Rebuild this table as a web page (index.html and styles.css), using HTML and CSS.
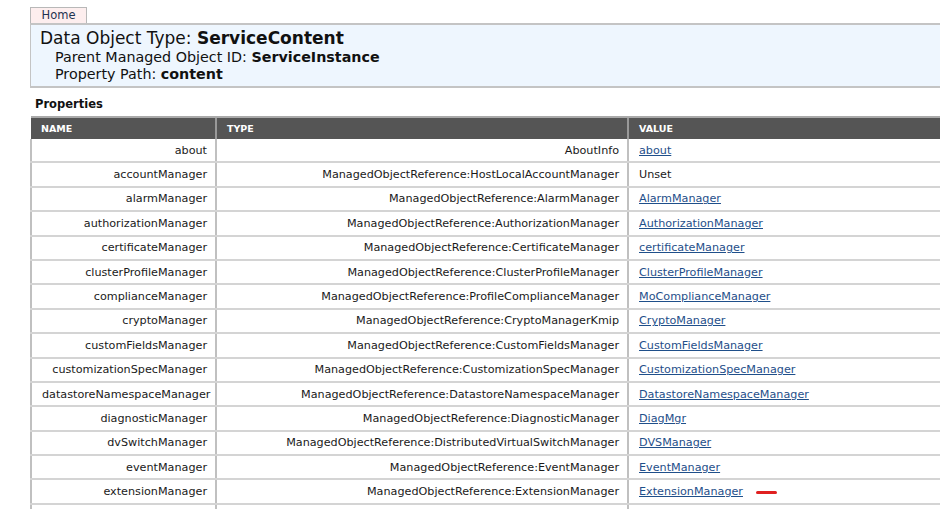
FILE: index.html
```html
<!DOCTYPE html>
<html>
<head>
<meta charset="utf-8">
<link rel="stylesheet" href="styles.css">
</head>
<body>
<div class="page">
  <div class="tabs"><a class="tab" href="#">Home</a></div>
  <div class="header">
    <div class="title">Data Object Type: <b>ServiceContent</b></div>
    <div class="sub">Parent Managed Object ID: <b>ServiceInstance</b></div>
    <div class="sub">Property Path: <b>content</b></div>
  </div>
  <div class="section">Properties</div>
  <table class="props">
    <thead>
      <tr><th class="c-name">NAME</th><th class="c-type">TYPE</th><th class="c-val">VALUE</th></tr>
    </thead>
    <tbody>
      <tr><td class="name">about</td><td class="type">AboutInfo</td><td class="val"><a href="#">about</a></td></tr>
      <tr><td class="name">accountManager</td><td class="type">ManagedObjectReference:HostLocalAccountManager</td><td class="val">Unset</td></tr>
      <tr><td class="name">alarmManager</td><td class="type">ManagedObjectReference:AlarmManager</td><td class="val"><a href="#">AlarmManager</a></td></tr>
      <tr><td class="name">authorizationManager</td><td class="type">ManagedObjectReference:AuthorizationManager</td><td class="val"><a href="#">AuthorizationManager</a></td></tr>
      <tr><td class="name">certificateManager</td><td class="type">ManagedObjectReference:CertificateManager</td><td class="val"><a href="#">certificateManager</a></td></tr>
      <tr><td class="name">clusterProfileManager</td><td class="type">ManagedObjectReference:ClusterProfileManager</td><td class="val"><a href="#">ClusterProfileManager</a></td></tr>
      <tr><td class="name">complianceManager</td><td class="type">ManagedObjectReference:ProfileComplianceManager</td><td class="val"><a href="#">MoComplianceManager</a></td></tr>
      <tr><td class="name">cryptoManager</td><td class="type">ManagedObjectReference:CryptoManagerKmip</td><td class="val"><a href="#">CryptoManager</a></td></tr>
      <tr><td class="name">customFieldsManager</td><td class="type">ManagedObjectReference:CustomFieldsManager</td><td class="val"><a href="#">CustomFieldsManager</a></td></tr>
      <tr><td class="name">customizationSpecManager</td><td class="type">ManagedObjectReference:CustomizationSpecManager</td><td class="val"><a href="#">CustomizationSpecManager</a></td></tr>
      <tr><td class="name">datastoreNamespaceManager</td><td class="type">ManagedObjectReference:DatastoreNamespaceManager</td><td class="val"><a href="#">DatastoreNamespaceManager</a></td></tr>
      <tr><td class="name">diagnosticManager</td><td class="type">ManagedObjectReference:DiagnosticManager</td><td class="val"><a href="#">DiagMgr</a></td></tr>
      <tr><td class="name">dvSwitchManager</td><td class="type">ManagedObjectReference:DistributedVirtualSwitchManager</td><td class="val"><a href="#">DVSManager</a></td></tr>
      <tr><td class="name">eventManager</td><td class="type">ManagedObjectReference:EventManager</td><td class="val"><a href="#">EventManager</a></td></tr>
      <tr><td class="name">extensionManager</td><td class="type">ManagedObjectReference:ExtensionManager</td><td class="val"><a href="#">ExtensionManager</a><span class="mark"></span></td></tr>
      <tr><td class="name">&nbsp;</td><td class="type">&nbsp;</td><td class="val">&nbsp;</td></tr>
    </tbody>
  </table>
</div>
</body>
</html>
```
FILE: styles.css
```css
html, body {
  margin: 0;
  padding: 0;
  background: #fff;
  overflow: hidden;
}
body {
  font-family: "DejaVu Sans", Verdana, sans-serif;
  color: #1a1a1a;
}
.page {
  padding: 7px 0 0 30px;
  width: 910px;
}
.tabs {
  display: flex;
}
.tab {
  display: block;
  width: 57px;
  height: 16px;
  box-sizing: border-box;
  background: #fdeeee;
  border: 1px solid #b8b8b8;
  border-bottom: none;
  font-size: 11.5px;
  line-height: 15px;
  text-align: center;
  color: #1f3350;
  text-decoration: none;
}
.header {
  background: #eef6fe;
  border-top: 2px solid #c4c4c4;
  border-bottom: 2px solid #c4c4c4;
  border-left: 1px solid #c4c4c4;
  padding: 3px 0 4px 9px;
  height: 54px;
}
.title {
  font-size: 17px;
  line-height: 21px;
  color: #111;
}
.sub {
  font-size: 14.3px;
  line-height: 17px;
  padding-left: 15px;
  color: #111;
}
.section {
  font-size: 11.5px;
  font-weight: bold;
  padding: 9px 0 0 5px;
  height: 19px;
  color: #111;
}
.props {
  border-collapse: collapse;
  width: 910px;
  table-layout: fixed;
  font-size: 11.2px;
}
.props th {
  background: #555;
  color: #fff;
  font-size: 9.5px;
  font-weight: bold;
  text-align: left;
  padding: 0 10px;
  height: 21px;
  border-top: 2px solid #aaa;
  border-left: 2px solid #999;
}
.props th:first-child { border-left: none; }
.c-name { width: 164px; }
.c-type { width: 390px; }
.props td {
  height: 22.4px;
  padding: 0 8px 0 10px;
  border-bottom: 2px solid #d4d4d4;
  border-left: 2px solid #c0c0c0;
  white-space: nowrap;
  color: #1a1a1a;
}
.props td.name, .props td.type { text-align: right; }
.props td.val { text-align: left; }
.props td.val a {
  color: #1f4f8a;
}
.mark {
  display: inline-block;
  width: 21px;
  height: 3px;
  background: #e02020;
  border-radius: 2px;
  margin-left: 13px;
  vertical-align: middle;
}
```
